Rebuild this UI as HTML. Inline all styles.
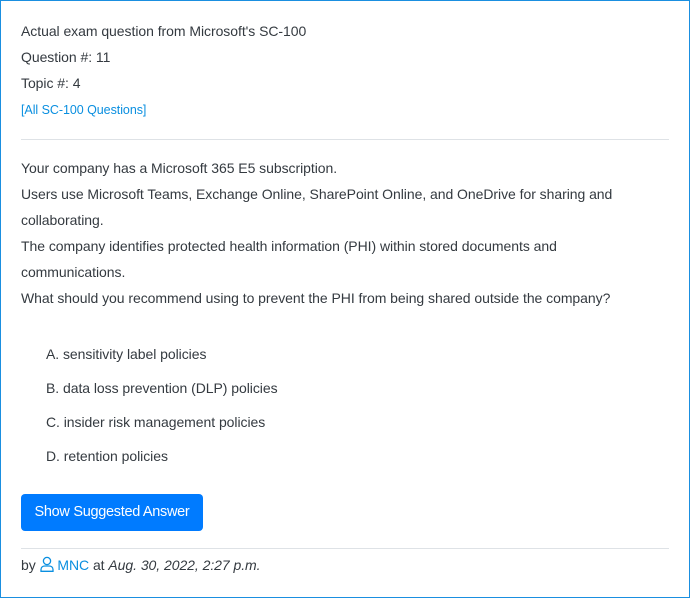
<!DOCTYPE html>
<html><head><style>
html,body{margin:0;padding:0;background:#fff}
body{width:690px;height:598px;position:relative;overflow:hidden;font-family:"Liberation Sans",sans-serif;color:#343a40;font-size:14px;letter-spacing:-0.05px}
.frame{position:absolute;left:0;top:0;width:688px;height:596px;border:1px solid #1a8fe0}
.t{position:absolute;left:21px;white-space:nowrap;line-height:20px}
.a{color:#0a8fe0}
hr{position:absolute;left:21px;width:648px;margin:0;border:0;border-top:1px solid #dee2e6}
.btn{position:absolute;left:21px;top:494px;width:182px;height:37px;background:#007bff;border-radius:4px;color:#fff;font-size:14.5px;letter-spacing:-0.3px;line-height:37px;text-align:center}
</style></head><body>
<div class="frame"></div>
<div class="t" style="top:21px">Actual exam question from Microsoft's SC-100</div>
<div class="t" style="top:47px">Question #: 11</div>
<div class="t" style="top:73px">Topic #: 4</div>
<div class="t a" style="top:100px;font-size:12.5px">[All SC-100 Questions]</div>
<hr style="top:139px">
<div class="t" style="top:158px">Your company has a Microsoft 365 E5 subscription.</div>
<div class="t" style="top:184px">Users use Microsoft Teams, Exchange Online, SharePoint Online, and OneDrive for sharing and</div>
<div class="t" style="top:210px">collaborating.</div>
<div class="t" style="top:236px">The company identifies protected health information (PHI) within stored documents and</div>
<div class="t" style="top:262px">communications.</div>
<div class="t" style="top:288px">What should you recommend using to prevent the PHI from being shared outside the company?</div>
<div class="t" style="top:344px;left:46px">A. sensitivity label policies</div>
<div class="t" style="top:378px;left:46px">B. data loss prevention (DLP) policies</div>
<div class="t" style="top:412px;left:46px">C. insider risk management policies</div>
<div class="t" style="top:446px;left:46px">D. retention policies</div>
<div class="btn">Show Suggested Answer</div>
<hr style="top:548px">
<div class="t" style="top:555px">by <svg width="14" height="16" viewBox="0 0 14 16" style="vertical-align:-2px"><circle cx="7" cy="5" r="3.6" fill="none" stroke="#0a8fe0" stroke-width="1.3"/><path d="M1 15.3V13.5C1 11.3 2.8 10 5 10H9C11.2 10 13 11.3 13 13.5V15.3Z" fill="none" stroke="#0a8fe0" stroke-width="1.3"/></svg> <span class="a">MNC</span> at <i>Aug. 30, 2022, 2:27 p.m.</i></div>
</body></html>
